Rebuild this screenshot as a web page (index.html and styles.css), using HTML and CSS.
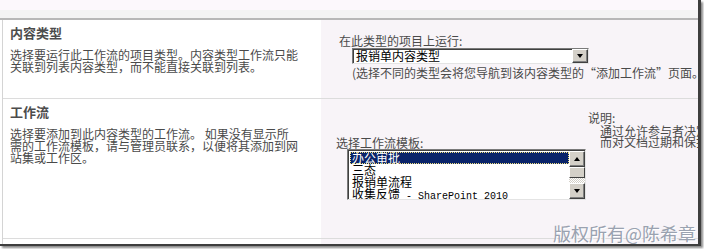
FILE: index.html
```html
<!DOCTYPE html>
<html lang="zh">
<head>
    <meta charset="UTF-8">
    <title>添加工作流</title>
    <link rel="stylesheet" href="styles.css">
</head>
<body>
    <div class="shot">
        <div class="top"></div>
        <div class="band"></div>
        <div class="frame">
            <div class="row row-type">
                <div class="label">
                    <h3>内容类型</h3>
                    <p>选择要运行此工作流的项目类型。内容类型工作流只能关联到列表内容类型，而不能直接关联到列表。</p>
                </div>
                <div class="field">
                    <div class="caption">在此类型的项目上运行:</div>
                    <div class="combo">
                        <span class="combo-text">报销单内容类型</span>
                        <span class="combo-btn"><i class="arrow-down"></i></span>
                    </div>
                    <div class="hint">(选择不同的类型会将您导航到该内容类型的“添加工作流”页面。</div>
                </div>
            </div>

            <div class="row row-flow">
                <div class="label">
                    <h3>工作流</h3>
                    <p>选择要添加到此内容类型的工作流。 如果没有显示所需的工作流模板，请与管理员联系，以便将其添加到网站集或工作区。</p>
                </div>
                <div class="field field-flow">
                    <div class="pick">
                        <div class="caption">选择工作流模板:</div>
                        <div class="listbox">
                            <ul class="items">
                                <li class="selected">办公审批</li>
                                <li>三态</li>
                                <li>报销单流程</li>
                                <li>收集反馈<span class="latin"> - SharePoint 2010</span></li>
                            </ul>
                            <div class="scroll">
                                <span class="sb-btn"><i class="arrow-up"></i></span>
                                <span class="sb-thumb"></span>
                                <span class="sb-track"></span>
                                <span class="sb-btn"><i class="arrow-down"></i></span>
                            </div>
                        </div>
                    </div>
                    <div class="desc">
                        <div>说明:</div>
                        <p>通过允许参与者决定是否批准文档或项目，<br>而对文档过期和保护进行管理。</p>
                    </div>
                </div>
            </div>

            <div class="row row-more">
                <div class="label">
                    <h3>名称</h3>
                </div>
                <div class="field"></div>
            </div>

            <div class="watermark">版权所有@陈希章</div>
        </div>
    </div>
</body>
</html>
```

FILE: styles.css
```css
body {
    margin: 0;
    background: #ffffff;
    font-family: "Noto Sans CJK SC", "DejaVu Sans", sans-serif;
    font-size: 12px;
    color: #4a4a4a;
    width: 704px;
    height: 249px;
    overflow: hidden;
}

.shot {
    width: 701px;
    height: 246px;
    overflow: hidden;
    border-right: 3px solid #3e3e3e;
    border-bottom: 2px solid #3e3e3e;
    box-shadow: 2px 2px 2px #8a8a8a;
    box-sizing: border-box;
}

.top {
    height: 10px;
    background: #fcf8fc;
}

.band {
    height: 8px;
    background: #f4f4f4;
    border-bottom: 2px solid #b8b8b8;
}

.frame {
    position: relative;
    margin-left: 2px;
    height: 224px;
    overflow: hidden;
    border-left: 1px solid #d4d4d4;
}

.row {
    display: flex;
    border-bottom: 1px solid #dcdcdc;
}

.row-type { height: 78px; }
.row-flow { height: 139px; }
.row-more { height: 40px; }

.label {
    width: 318px;
    flex: none;
    background: #ffffff;
    padding: 5px 7px 0;
    box-sizing: border-box;
}

.label h3 {
    margin: 0;
    font-size: 13px;
    line-height: 15px;
    font-weight: bold;
    color: #4c4c4c;
}

.label p {
    margin: 9px 0 0;
    width: 289px;
    line-height: 12px;
    color: #4a4a4a;
}

.field {
    flex: 1;
    background: #f8f4f8;
    padding: 14px 0 0 18px;
    min-width: 0;
}

.caption {
    line-height: 13px;
}

.combo {
    display: flex;
    margin: 1px 0 0 13px;
    width: 237px;
    height: 16px;
    background: #ffffff;
    border: 1px solid;
    border-color: #7a7a7a #e4e4e4 #e4e4e4 #7a7a7a;
    box-shadow: inset 1px 1px 0 #404040;
    box-sizing: border-box;
}

.combo-text {
    flex: 1;
    padding-left: 3px;
    line-height: 14px;
    color: #000000;
}

.combo-btn,
.sb-btn {
    display: flex;
    align-items: center;
    justify-content: center;
    width: 16px;
    background: #d4d0c8;
    border: 1px solid;
    border-color: #ffffff #404040 #404040 #ffffff;
    box-shadow: inset -1px -1px 0 #808080;
    box-sizing: border-box;
}

.arrow-down,
.arrow-up {
    width: 0;
    height: 0;
    border-left: 3px solid transparent;
    border-right: 3px solid transparent;
}

.arrow-down { border-top: 4px solid #000000; }
.arrow-up { border-bottom: 4px solid #000000; }

.hint {
    margin: 2px 0 0 13px;
    line-height: 14px;
    white-space: nowrap;
}

.field-flow {
    display: flex;
    padding: 13px 0 0 15px;
}

.pick {
    width: 252px;
    flex: none;
    padding-top: 24px;
}

.listbox {
    display: flex;
    margin: 0 0 0 11px;
    width: 239px;
    height: 51px;
    background: #ffffff;
    border: 1px solid;
    border-color: #7a7a7a #e4e4e4 #e4e4e4 #7a7a7a;
    box-shadow: inset 1px 1px 0 #404040;
    box-sizing: border-box;
    padding: 2px 0 0 2px;
    overflow: hidden;
}

.items {
    flex: 1;
    list-style: none;
    margin: 0;
    padding: 0;
    color: #000000;
}

.items li {
    height: 12px;
    line-height: 12px;
    padding-left: 2px;
    white-space: nowrap;
}

.items li.selected {
    background: #0a246a;
    color: #ffffff;
    outline: 1px dotted #f0e080;
    outline-offset: -1px;
}

.latin {
    font-family: "Liberation Mono", monospace;
    font-size: 10px;
}

.scroll {
    display: flex;
    flex-direction: column;
    width: 16px;
    margin-top: -1px;
}

.scroll .sb-btn { height: 16px; }

.sb-thumb {
    height: 11px;
    background: #d4d0c8;
    border: 1px solid;
    border-color: #ffffff #404040 #404040 #ffffff;
    box-sizing: border-box;
}

.sb-track {
    flex: 1;
    background: repeating-conic-gradient(#d4d0c8 0 25%, #ffffff 0 50%) 0 0 / 2px 2px;
}

.desc {
    flex: 1;
    white-space: nowrap;
    line-height: 12px;
}

.desc p {
    margin: 1px 0 0 12px;
    line-height: 11px;
}

.watermark {
    position: absolute;
    right: 2px;
    bottom: 0;
    font-size: 18px;
    line-height: 22px;
    color: #9aa2b0;
    text-shadow: 1px 1px 0 #ffffff;
}
```
